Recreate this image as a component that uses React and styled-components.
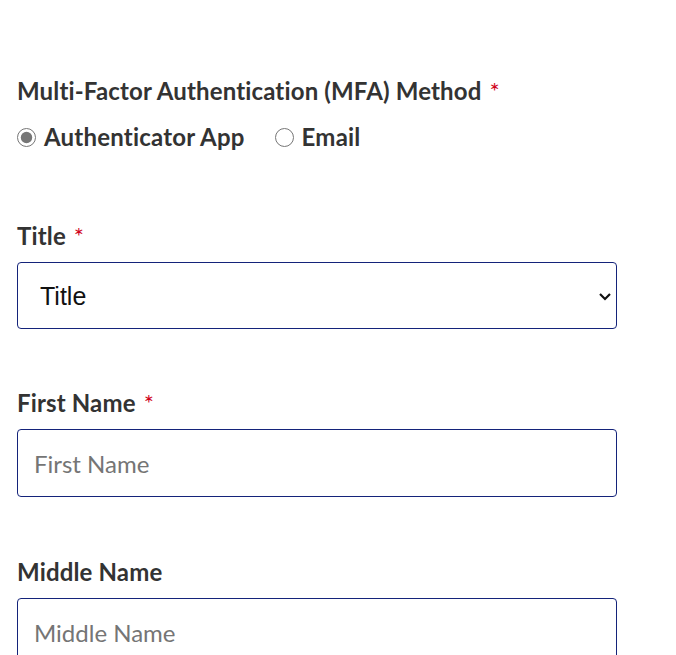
import React from "react";
import styled, { createGlobalStyle } from "styled-components";

const GlobalStyle = createGlobalStyle`
    html, body {
        margin: 0;
        padding: 0;
        background: #ffffff;
    }
    body {
        font-family: Lato, "Open Sans", sans-serif;
        color: #333333;
    }
`;

export const Page = styled.div`
    padding: 77px 0 0 17px;
    width: 600px;
`;

export const FieldGroup = styled.div`
    display: flex;
    flex-direction: column;
    margin-bottom: ${props => props.spacing || "60px"};
`;

export const Label = styled.label`
    font-family: Lato, sans-serif;
    font-size: 24px;
    line-height: 28px;
    font-weight: 700;
    letter-spacing: 0.15px;
    color: #333333;
    margin-bottom: ${props => props.gap || "12px"};
`;

export const Required = styled.span`
    color: #d0021b;
    margin-left: 8px;
    font-weight: 400;
`;

export const RadioRow = styled.div`
    display: flex;
    align-items: center;
    gap: 30px;
    height: 28px;
`;

export const RadioOption = styled.label`
    display: flex;
    align-items: center;
    gap: 8px;
    font-family: Lato, sans-serif;
    font-size: 24px;
    line-height: 28px;
    font-weight: 700;
    letter-spacing: 0.2px;
    color: #333333;
`;

export const Radio = styled.input.attrs({ type: "radio" })`
    margin: 0;
    width: 19px;
    height: 19px;
    accent-color: #767676;
`;

export const SelectWrap = styled.div`
    position: relative;
    width: 600px;
`;

export const Select = styled.select`
    appearance: none;
    width: 100%;
    height: 67px;
    box-sizing: border-box;
    padding: 0 40px 0 22px;
    border: 1px solid #14237a;
    border-radius: 4px;
    background: #ffffff;
    font-family: "Liberation Sans", Arial, sans-serif;
    font-size: 25px;
    color: #111111;
`;

export const Chevron = styled.svg`
    position: absolute;
    right: 5px;
    top: 50%;
    transform: translateY(-50%);
    width: 14px;
    height: 14px;
    pointer-events: none;
`;

export const TextInput = styled.input`
    width: 100%;
    height: 68px;
    box-sizing: border-box;
    padding: 0 16px;
    border: 1px solid #14237a;
    border-radius: 4px;
    font-family: Lato, sans-serif;
    font-size: 24px;
    color: #333333;

    &::placeholder {
        color: #757575;
    }
`;

export default function App() {
    return (
        <>
            <GlobalStyle />
            <Page>
                <FieldGroup spacing="71px">
                    <Label gap="18px">
                        Multi-Factor Authentication (MFA) Method<Required>*</Required>
                    </Label>
                    <RadioRow>
                        <RadioOption>
                            <Radio name="mfa" defaultChecked />
                            Authenticator App
                        </RadioOption>
                        <RadioOption>
                            <Radio name="mfa" />
                            Email
                        </RadioOption>
                    </RadioRow>
                </FieldGroup>

                <FieldGroup>
                    <Label>
                        Title<Required>*</Required>
                    </Label>
                    <SelectWrap>
                        <Select defaultValue="">
                            <option value="">Title</option>
                            <option value="mr">Mr</option>
                            <option value="mrs">Mrs</option>
                            <option value="ms">Ms</option>
                            <option value="dr">Dr</option>
                        </Select>
                        <Chevron viewBox="0 0 14 14">
                            <path d="M2 5 L7 10 L12 5" fill="none" stroke="#111" strokeWidth="2.2" />
                        </Chevron>
                    </SelectWrap>
                </FieldGroup>

                <FieldGroup spacing="61px">
                    <Label>
                        First Name<Required>*</Required>
                    </Label>
                    <TextInput placeholder="First Name" />
                </FieldGroup>

                <FieldGroup>
                    <Label>Middle Name</Label>
                    <TextInput placeholder="Middle Name" />
                </FieldGroup>
            </Page>
        </>
    );
}
